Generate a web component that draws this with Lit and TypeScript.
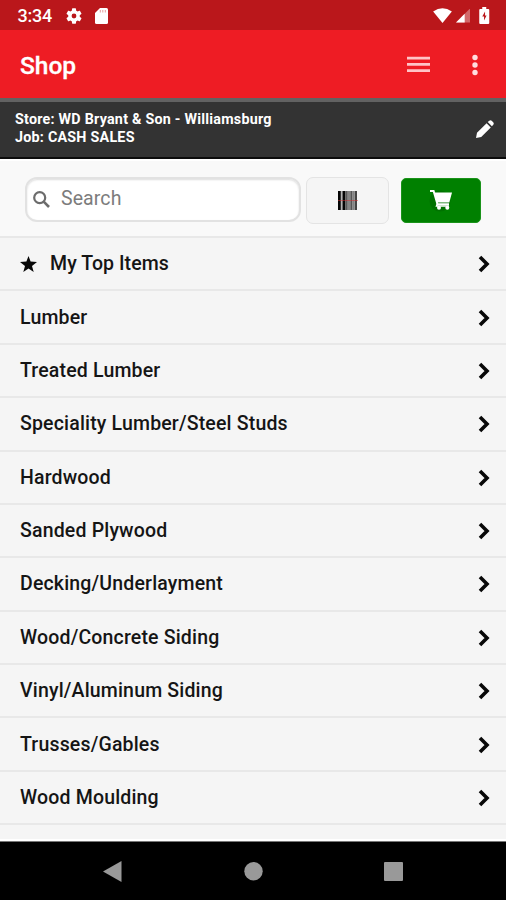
import { LitElement, html, css, svg } from "lit";
import { customElement, property } from "lit/decorators.js";

const CATEGORIES = [
  "Lumber",
  "Treated Lumber",
  "Speciality Lumber/Steel Studs",
  "Hardwood",
  "Sanded Plywood",
  "Decking/Underlayment",
  "Wood/Concrete Siding",
  "Vinyl/Aluminum Siding",
  "Trusses/Gables",
  "Wood Moulding",
  "",
];

@customElement("status-bar")
class StatusBar extends LitElement {
  static styles = css`
    :host {
      display: flex;
      align-items: center;
      height: 30px;
      box-sizing: border-box;
      padding: 1px 16.500px 0 17.500px;
      background: #ba171b;
      color: #fff;
    }
    .time {
      font-size: 18px;
      font-weight: 500;
      letter-spacing: -0.250px;
      width: 48.500px;
      line-height: 28px;
      padding-top: 1px;
    }
    svg { display: block; fill: #fff; }
    .gear { margin-right: 13px; }
    .space { flex: 1; }
    .wifi { margin-right: 3.500px; }
    .signal { margin-right: 9px; }
  `;
  render() {
    return html`
      <span class="time">3:34</span>
      <svg class="gear" width="16" height="16" viewBox="2 2 20 20">
        <path d="M19.14 12.94c.04-.3.06-.61.06-.94s-.02-.64-.07-.94l2.03-1.58a.49.49 0 0 0 .12-.61l-1.92-3.32a.49.49 0 0 0-.59-.22l-2.39.96a7 7 0 0 0-1.62-.94l-.36-2.54a.48.48 0 0 0-.48-.41h-3.84a.48.48 0 0 0-.47.41l-.36 2.54c-.59.24-1.13.57-1.62.94l-2.39-.96a.48.48 0 0 0-.59.22L2.74 8.87a.48.48 0 0 0 .12.61l2.03 1.58c-.05.3-.09.63-.09.94s.02.64.07.94l-2.03 1.58a.49.49 0 0 0-.12.61l1.92 3.32c.12.22.37.29.59.22l2.39-.96c.5.38 1.03.7 1.62.94l.36 2.54c.05.24.24.41.48.41h3.84c.24 0 .44-.17.47-.41l.36-2.54a7 7 0 0 0 1.62-.94l2.39.96c.22.08.47 0 .59-.22l1.92-3.32a.48.48 0 0 0-.12-.61zM12 15a3 3 0 1 1 0-6 3 3 0 0 1 0 6z" />
      </svg>
      <svg width="13" height="16" viewBox="0 0 13 16">
        <path d="M5 0H11.5Q13 0 13 1.5V14.5Q13 16 11.5 16H1.5Q0 16 0 14.500V5z" />
        <path d="M5.3 2v2.500M7.800 2v2.500M10.300 2v2.500" stroke="#e79a9c" stroke-width="1" />
      </svg>
      <span class="space"></span>
      <svg class="wifi" width="19" height="15" viewBox="0 0 20 16">
        <path d="M0 3.600Q10-3.200 20 3.600L10 16z" />
      </svg>
      <svg class="signal" width="14.500" height="14.500" viewBox="0 0 15 15">
        <path d="M15 0V15H0z" opacity=".35" />
        <path d="M9 6V15H0z" />
      </svg>
      <svg width="10.500" height="17" viewBox="0 0 10 17">
        <path d="M3 0h4v2h2q1 0 1 1v13q0 1-1 1H1q-1 0-1-1V3q0-1 1-1h2z" />
        <path d="M5.800 4.500 3 9.500h1.800V13.500L7.300 8.500H5.800z" fill="#ba171b" />
      </svg>
    `;
  }
}

@customElement("app-header")
class AppHeader extends LitElement {
  static styles = css`
    :host {
      display: flex;
      align-items: center;
      height: 68px;
      box-sizing: border-box;
      padding: 1px 28px 0 20px;
      background: #ee1c24;
      color: #fff;
    }
    .title {
      flex: 1;
      font-size: 24.500px;
      font-weight: 500;
      line-height: 30px;
      padding-top: 2px;
      -webkit-text-stroke: 0.300px #fff;
    }
    svg { display: block; }
    .menu { margin-right: 42px; fill: #ffc4c7; }
    .more { fill: #ffdcde; }
  `;
  render() {
    return html`
      <span class="title">Shop</span>
      <svg class="menu" width="23" height="17" viewBox="0 0 23 17">
        <path d="M0 .800h23v2.800H0zM0 7h23v2.800H0zM0 13.200h23v2.800H0z" />
      </svg>
      <svg class="more" width="6" height="22" viewBox="0 0 6 22">
        <circle cx="3" cy="3.500" r="2.700" /><circle cx="3" cy="11" r="2.700" /><circle cx="3" cy="18.500" r="2.700" />
      </svg>
    `;
  }
}

@customElement("store-banner")
class StoreBanner extends LitElement {
  static styles = css`
    :host {
      display: flex;
      justify-content: space-between;
      height: 61px;
      box-sizing: border-box;
      padding: 8px 12px 0 15px;
      border-top: 4px solid #626262;
      border-bottom: 2px solid #0c0c0c;
      background: #333;
      color: #fff;
      font-size: 14.300px;
      font-weight: 700;
      line-height: 18px;
    }
    svg { margin-top: 10px; fill: #fff; }
    .lines { white-space: nowrap; letter-spacing: 0.240px; }
  `;
  render() {
    return html`
      <div class="lines">
        <div>Store: WD Bryant &amp; Son - Williamsburg</div>
        <div>Job: CASH SALES</div>
      </div>
      <svg width="18" height="18" viewBox="0 0 18 18">
        <path d="M0 18 1 12.800 10.600 3.200 14.800 7.400 5.200 17zM11.700 2.100 13.300.700Q14.500-.300 15.700.800L17.200 2.300Q18.300 3.500 17.300 4.700L15.900 6.300z" />
      </svg>
    `;
  }
}

@customElement("search-row")
class SearchRow extends LitElement {
  static styles = css`
    :host {
      display: flex;
      align-items: flex-start;
      height: 77px;
      box-sizing: border-box;
      padding: 16px 25px 0 25px;
      background: #f9f9f9;
      border-top: 2px solid #fff;
    }
    .field {
      display: flex;
      align-items: center;
      box-sizing: border-box;
      width: 276px;
      height: 45px;
      padding: 0 6px;
      border: 2px solid #e2e2e2;
      border-radius: 12px;
      background: #fff;
      box-shadow: inset 0 1px 2px #ddd;
      color: #7c7c7c;
      font-size: 19.500px;
      letter-spacing: 0.100px;
    }
    .field svg { margin-right: 11px; }
    .field span { margin-top: -2px; }
    .scan, .cart {
      display: flex;
      align-items: center;
      justify-content: center;
      box-sizing: border-box;
    }
    .scan {
      width: 83px;
      height: 47px;
      margin: 0 12px 0 5px;
      border: 1.500px solid #e4e4e4;
      border-radius: 7px;
      background: #f5f5f5;
    }
    .cart {
      width: 80px;
      height: 45px;
      margin-top: 0.500px;
      border: 1px solid #1a931a;
      border-radius: 5px;
      background: #008000;
    }
    svg { display: block; }
  `;
  render() {
    const bars = [
      [0, 2.8, "#050505"], [4.6, 2.8, "#050505"], [8.2, 1.3, "#444"],
      [10.4, 1.2, "#666"], [12.4, 2, "#555"], [15.2, 1, "#777"], [16.8, 2.2, "#444"],
    ] as const;
    return html`
      <div class="field">
        <svg width="17" height="17" viewBox="0 0 17 17" fill="none" stroke="#6c6c6c" stroke-width="2.200">
          <circle cx="6.700" cy="6.700" r="5.500" /><path d="M10.700 10.700 16 16" stroke-width="2.600" />
        </svg>
        <span>Search</span>
      </div>
      <div class="scan">
        <svg width="20" height="19" viewBox="0 0 20 19">
          <rect x="3" width="16" height="19" fill="#b4b4b4" />
          ${bars.map(([x, w, c]) => svg`<rect x=${x} width=${w} height="19" fill=${c} />`)}
          <path d="M0 9.500H20" stroke="#d33" stroke-width="1" opacity=".5" />
        </svg>
      </div>
      <div class="cart">
        <svg width="24" height="24" viewBox="0 0 24 24">
          <circle cx="11" cy="13" r="10.500" fill="#007200" />
          <path d="M1 3H4.600L8.500 16.200H20" fill="none" stroke="#fff" stroke-width="2" />
          <path d="M5.400 4.500H23L20.300 14.500H8.200z" fill="#fff" />
          <path d="M8.500 15.500 7.500 18H20" fill="none" stroke="#fff" stroke-width="1.500" />
          <circle cx="10" cy="19.800" r="2" fill="#fff" /><circle cx="18.300" cy="19.800" r="2" fill="#fff" />
        </svg>
      </div>
    `;
  }
}

@customElement("category-row")
class CategoryRow extends LitElement {
  @property() label = "";
  @property({ type: Boolean }) starred = false;
  static styles = css`
    :host {
      display: flex;
      flex: none;
      align-items: center;
      height: 53.380px;
      box-sizing: border-box;
      padding: 0 16px 0 20px;
      border-top: 2px solid #e8e8e8;
      color: #151515;
      font-size: 19.500px;
      font-weight: 500;
      letter-spacing: 0.170px;
      white-space: nowrap;
    }
    .label { flex: 1; }
    .star { margin: 0 13px 0 0; }
    .starred { letter-spacing: 0.080px; }
    .chevron { margin-top: 1px; }
    svg { display: block; }
  `;
  render() {
    return html`
      ${this.starred
        ? html`<svg class="star" width="17" height="16" viewBox="0 0 17 16">
            <path d="M8.500 0 10.600 5.600 17 6 12 9.900 13.700 16 8.500 12.600 3.300 16 5 9.900 0 6 6.400 5.600z" fill="#080808" />
          </svg>`
        : ""}
      <span class="label ${this.starred ? "starred" : ""}">${this.label}</span>
      <svg class="chevron" width="12" height="18" viewBox="0 0 12 18">
        <path d="M2 2 9 9 2 16" fill="none" stroke="#080808" stroke-width="3.600" />
      </svg>
    `;
  }
}

@customElement("nav-bar")
class NavBar extends LitElement {
  static styles = css`
    :host {
      display: flex;
      align-items: center;
      justify-content: space-between;
      height: 59px;
      box-sizing: border-box;
      padding: 0 103px;
      border-top: 1px solid #777;
      background: #000;
    }
    svg { display: block; fill: #999; }
  `;
  render() {
    return html`
      <svg width="19" height="21" viewBox="0 0 19 21"><path d="M0 10.500 18.500 0V21z" /></svg>
      <svg width="19" height="19" viewBox="0 0 19 19"><circle cx="9.500" cy="9.200" r="9.200" /></svg>
      <svg width="19" height="19" viewBox="0 0 19 19"><rect width="19" height="19" rx="1" /></svg>
    `;
  }
}

@customElement("app-root")
class AppRoot extends LitElement {
  static styles = css`
    :host {
      display: flex;
      flex-direction: column;
      height: 900px;
      overflow: hidden;
      background: #fff;
      font-family: Roboto, "Liberation Sans", sans-serif;
    }
    .list {
      display: flex;
      flex-direction: column;
      flex: 1;
      min-height: 0;
      overflow: hidden;
      background: #f5f5f5;
      border-bottom: 2px solid #fff;
    }
    status-bar, app-header, store-banner, search-row, nav-bar { flex: none; }
  `;
  render() {
    return html`
      <status-bar></status-bar>
      <app-header></app-header>
      <store-banner></store-banner>
      <search-row></search-row>
      <div class="list">
        <category-row label="My Top Items" starred></category-row>
        ${CATEGORIES.map((c) => html`<category-row label=${c}></category-row>`)}
      </div>
      <nav-bar></nav-bar>
    `;
  }
}
